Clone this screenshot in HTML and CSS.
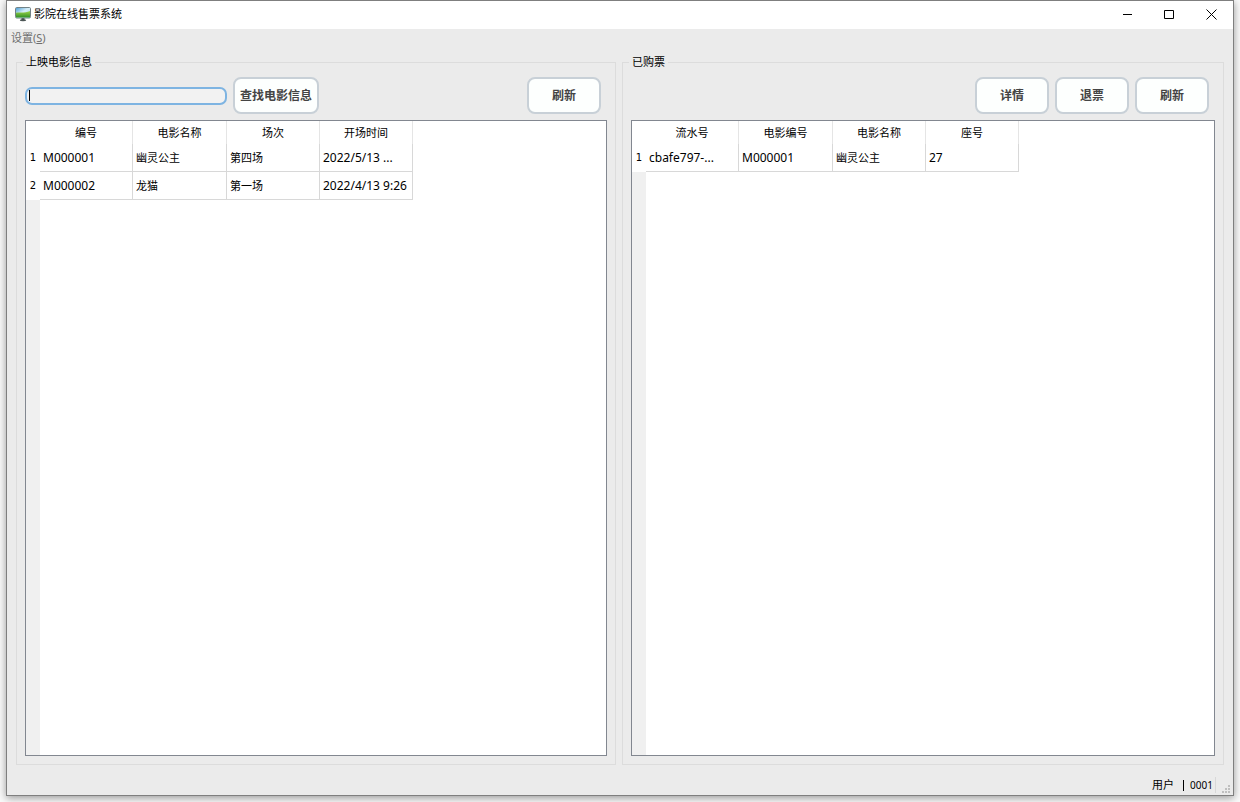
FILE: index.html
```html
<!DOCTYPE html>
<html lang="zh-CN">
<head>
<meta charset="utf-8">
<title>影院在线售票系统</title>
<link rel="stylesheet" href="styles.css">
</head>
<body>
<div class="window">
  <header class="titlebar">
    <svg class="app-icon" width="16" height="16" viewBox="0 0 16 16" aria-hidden="true">
      <defs>
        <linearGradient id="sky" x1="0" y1="0" x2="1" y2="1"><stop offset="0" stop-color="#4f9fd6"/><stop offset=".45" stop-color="#d4edf8"/><stop offset="1" stop-color="#a9d6ee"/></linearGradient>
        <linearGradient id="hill" x1="0" y1="0" x2="0" y2="1"><stop offset="0" stop-color="#9fd64c"/><stop offset="1" stop-color="#2f8f26"/></linearGradient>
      </defs>
      <path d="M6.500 11.500h3v2.500h-3z" fill="#3c4646"/>
      <ellipse cx="8" cy="14.300" rx="3.200" ry="1" fill="#4c5656"/>
      <rect x="0.500" y="1.500" width="15" height="10.500" rx="1.200" fill="#dde6e6" stroke="#728286"/>
      <rect x="1" y="2" width="14" height="9.500" fill="url(#sky)"/>
      <path d="M1 6.800C5 6 10 7.500 15 5v6.500H1z" fill="url(#hill)"/>
    </svg>
    <h1 class="title">影院在线售票系统</h1>
    <div class="controls">
      <button type="button" class="control" aria-label="最小化"><svg width="11" height="11" viewBox="0 0 11 11"><path d="M1 5.500h9" /></svg></button>
      <button type="button" class="control" aria-label="最大化"><svg width="11" height="11" viewBox="0 0 11 11"><path d="M.5 1.500h9v8h-9z" /></svg></button>
      <button type="button" class="control" aria-label="关闭"><svg width="11" height="11" viewBox="0 0 11 11"><path d="M.5.5l10 10M10.500.5l-10 10" /></svg></button>
    </div>
  </header>
  <nav class="menubar"><button type="button" class="menu">设置(<u>S</u>)</button></nav>
  <main class="panels">
    <fieldset class="group">
      <legend>上映电影信息</legend>
      <div class="toolbar">
        <input class="search" type="text" aria-label="电影信息">
        <button type="button" class="btn btn-search">查找电影信息</button>
        <button type="button" class="btn push">刷新</button>
      </div>
      <div class="sheet">
        <table class="grid">
          <colgroup><col class="c-num"><col class="c"><col class="c-wide"><col class="c"><col class="c"></colgroup>
          <thead><tr><td></td><th scope="col">编号</th><th scope="col">电影名称</th><th scope="col">场次</th><th scope="col">开场时间</th></tr></thead>
          <tbody>
            <tr><th scope="row">1</th><td class="code">M000001</td><td>幽灵公主</td><td>第四场</td><td class="code">2022/5/13 ...</td></tr>
            <tr><th scope="row">2</th><td class="code">M000002</td><td>龙猫</td><td>第一场</td><td class="code">2022/4/13 9:26</td></tr>
          </tbody>
        </table>
      </div>
    </fieldset>
    <fieldset class="group">
      <legend>已购票</legend>
      <div class="toolbar">
        <button type="button" class="btn push">详情</button>
        <button type="button" class="btn">退票</button>
        <button type="button" class="btn">刷新</button>
      </div>
      <div class="sheet">
        <table class="grid">
          <colgroup><col class="c-num"><col class="c"><col class="c-wide"><col class="c"><col class="c"></colgroup>
          <thead><tr><td></td><th scope="col">流水号</th><th scope="col">电影编号</th><th scope="col">电影名称</th><th scope="col">座号</th></tr></thead>
          <tbody>
            <tr><th scope="row">1</th><td class="code">cbafe797-...</td><td class="code">M000001</td><td>幽灵公主</td><td class="code">27</td></tr>
          </tbody>
        </table>
      </div>
    </fieldset>
  </main>
  <footer class="statusbar">
    <span class="user">用户</span>
    <span class="bar"></span>
    <span class="uid">0001</span>
    <svg class="grip" width="8" height="8" viewBox="0 0 8 8" aria-hidden="true"><path d="M6 0h2v2H6zM3 3h2v2H3zM6 3h2v2H6zM0 6h2v2H0zM3 6h2v2H3zM6 6h2v2H6z" fill="#bfbfbf"/></svg>
  </footer>
</div>
</body>
</html>
```
FILE: styles.css
```css
* {
  box-sizing: border-box;
}

body {
  margin: 0;
  padding: 0 6px 6px;
  height: 100vh;
  display: flex;
  overflow: hidden;
  background: #fafafa;
  color: #000;
  font: 11px/16px "Noto Sans", "Noto Sans CJK SC", sans-serif;
}

button,
input {
  font: inherit;
  color: inherit;
}

.window {
  flex: 1;
  min-width: 0;
  display: flex;
  flex-direction: column;
  border: 1px solid #7f7f7f;
  background: #ebebeb;
  box-shadow: 0 2px 8px rgba(0, 0, 0, 0.4);
}

.titlebar {
  display: flex;
  align-items: center;
  height: 28px;
  padding: 0 1px 2px 8px;
  background: #fff;
}

.title {
  margin: 0 auto 0 3px;
  font-size: 11px;
  font-weight: 400;
}

.controls {
  display: flex;
}

.control {
  width: 42px;
  height: 26px;
  padding: 0;
  border: 0;
  background: none;
  display: grid;
  place-items: center;
}

.control path {
  fill: none;
  stroke: #000;
}

.menubar {
  display: flex;
  height: 19px;
  padding: 0 0 2px 4px;
}

.menu {
  padding: 0;
  border: 0;
  background: none;
  color: #6e6e6e;
}

.panels {
  flex: 1;
  min-height: 0;
  display: grid;
  grid-template-columns: 600fr 602fr;
  gap: 6px;
  padding: 6px 9px 0;
}

.group {
  min-width: 0;
  margin: 0;
  padding: 7px 8px 8px;
  border: 1px solid #dcdcdc;
  display: flex;
  flex-direction: column;
  gap: 6px;
}

.group legend {
  margin-left: -2px;
  padding: 0 3px;
}

.toolbar {
  display: flex;
  align-items: center;
  gap: 6px;
  padding-right: 6px;
}

.search {
  width: 202px;
  height: 18px;
  padding: 0 2px;
  border: 2px solid #7eb4e2;
  border-radius: 7px;
  background: linear-gradient(#000, #000) 2px center / 1px 11px no-repeat #f2f2f2;
  outline: 0;
}

.search:focus {
  background-image: none;
}

.btn {
  width: 74px;
  height: 37px;
  padding: 1px 0 0;
  border: 2px solid #c8d0d7;
  border-radius: 8px;
  background: #fdfffe;
  color: #444;
  font-size: 12px;
  font-weight: 700;
}

.btn-search {
  width: 86px;
}

.push {
  margin-left: auto;
}

.sheet {
  flex: 1;
  border: 1px solid #828790;
  background: linear-gradient(to right, #f0f0f0 14px, #fff 14px);
}

.grid {
  width: 387px;
  table-layout: fixed;
  border-collapse: separate;
  border-spacing: 0;
  background: #fff;
}

.c-num {
  width: 14px;
}

.c {
  width: 93px;
}

.c-wide {
  width: 94px;
}

.grid th,
.grid td {
  padding: 0;
  font-weight: 400;
  white-space: nowrap;
}

.grid thead tr {
  height: 23px;
}

.grid thead th {
  border-right: 1px solid #e5e5e5;
}

.grid tbody tr {
  height: 28px;
}

.grid tbody th {
  font: 10px/16px "DejaVu Sans", sans-serif;
}

.grid tbody td {
  padding-left: 3px;
  border-right: 1px solid #d8d8d8;
  border-bottom: 1px solid #d8d8d8;
}

.grid .code {
  font-size: 12px;
}

.statusbar {
  display: flex;
  align-items: center;
  justify-content: flex-end;
  height: 30px;
  padding: 10px 3px 0 0;
}

.bar {
  width: 1px;
  height: 11px;
  margin: 0 6px 0 9px;
  background: #000;
}

.uid {
  padding-right: 2px;
  border-right: 1px solid #d8d8d8;
  font-size: 10px;
}

.grip {
  align-self: flex-end;
  margin: 0 0 2px 6px;
}
```
